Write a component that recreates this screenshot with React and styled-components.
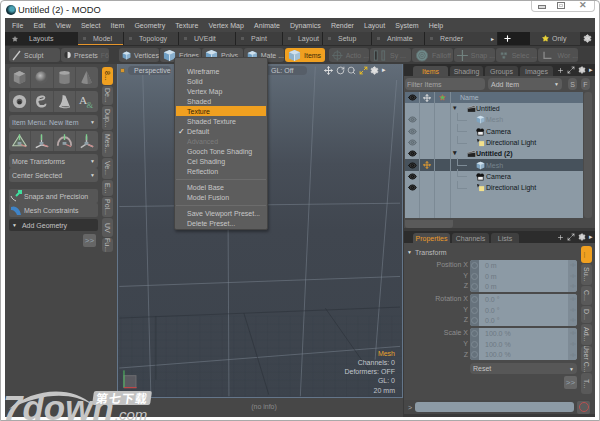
import React from "react";
import styled, { createGlobalStyle } from "styled-components";
import { Settings, Search, RotateCw, Move, Star, Plus, Eye, Maximize2 } from "lucide-react";

const GlobalStyle = createGlobalStyle`
  html, body { margin: 0; padding: 0; background: #fff; }
  * { box-sizing: border-box; }
  body { font-family: "Liberation Sans", Arial, sans-serif; font-size: 7px; }
`;

const menus = ["File", "Edit", "View", "Select", "Item", "Geometry", "Texture", "Vertex Map", "Animate", "Dynamics", "Render", "Layout", "System", "Help"];
const layouts = [
  { name: "Model", w: 45, active: true },
  { name: "Topology", w: 54 },
  { name: "UVEdit", w: 56 },
  { name: "Paint", w: 46 },
  { name: "Layout", w: 39 },
  { name: "Setup", w: 48 },
  { name: "Animate", w: 52 },
  { name: "Render", w: 72, more: true },
];
const modes = [
  { name: "Vertices", w: 40, c: "#6f9fc4" },
  { name: "Edges", w: 41, c: "#6f9fc4" },
  { name: "Polys", w: 41, c: "#6f9fc4" },
  { name: "Mate ...", w: 40, c: "#6f9fc4" },
];
const snaps = [
  { name: "Actio ...", w: 40 },
  { name: "Sy ...", w: 41 },
  { name: "Falloff", w: 41 },
  { name: "Snap ...", w: 41 },
  { name: "Selec ...", w: 41 },
  { name: "Wor ...", w: 40 },
];
const sideTabs = [
  { t: "8...", h: 18, on: true },
  { t: "De...", h: 19 },
  { t: "Dup...", h: 24 },
  { t: "Mes...", h: 26 },
  { t: "Ve...", h: 21 },
  { t: "E...", h: 16 },
  { t: "Pol...", h: 20 },
  { t: "UV", h: 19 },
  { t: "Fu...", h: 14 },
];
const propTabs = [
  { t: "...", h: 17, on: true },
  { t: "Su...", h: 21 },
  { t: "C...", h: 19 },
  { t: "D...", h: 17 },
  { t: "Ad...", h: 21 },
  { t: "User C...", h: 26 },
  { t: "T...", h: 21 },
];
const viewMenu = [
  ["Wireframe"], ["Solid"], ["Vertex Map"], ["Shaded"], ["Texture", "on"], ["Shaded Texture"],
  ["Default", "check"], ["Advanced", "off"], ["Gooch Tone Shading"], ["Cel Shading"], ["Reflection"],
  null, ["Model Base"], ["Model Fusion"], null, ["Save Viewport Preset..."], ["Delete Preset..."],
];
const tree = [
  { name: "Untitled", icon: "scene", depth: 0, vis: false },
  { name: "Mesh", icon: "mesh", depth: 1, vis: "dim", dim: true },
  { name: "Camera", icon: "camera", depth: 1, vis: "dim" },
  { name: "Directional Light", icon: "light", depth: 1, vis: "dim" },
  { name: "Untitled (2)", icon: "scene", depth: 0, vis: true, bold: true },
  { name: "Mesh", icon: "mesh", depth: 1, vis: true, dim: true, sel: true },
  { name: "Camera", icon: "camera", depth: 1, vis: true },
  { name: "Directional Light", icon: "light", depth: 1, vis: true },
];
const transforms = [
  { label: "Position", vals: ["0 m", "0 m", "0 m"] },
  { label: "Rotation", vals: ["0.0 °", "0.0 °", "0.0 °"] },
  { label: "Scale", vals: ["100.0 %", "100.0 %", "100.0 %"] },
];

/* ---------- drawings ---------- */
const CubeIcon = ({ size = 13, c = "#6f9fc4" }) => (
  <svg width={size} height={size} viewBox="0 0 14 14">
    <path d="M7 1l6 2.6v6.6L7 13 1 10.200V3.600z" fill={c} />
    <path d="M1 3.600L7 6.200l6-2.600L7 1z" fill="#cfe0ec" />
    <path d="M7 6.200V13l6-2.800V3.600z" fill="#fff" fillOpacity=".18" />
    <path d="M7 6.200V13" stroke="#e8f1f7" strokeWidth=".8" />
  </svg>
);

const PrimIcon = ({ kind }) => {
  const grey = "#8b8b8b";
  const size = { width: 17, height: 17, viewBox: "0 0 18 18" };
  if (kind === "cube") return <svg {...size}><path d="M9 2l6 3v8l-6 3-6-3V5z" fill={grey} /><path d="M3 5l6 3 6-3-6-3z" fill="#a5a5a5" /><path d="M9 8v8l6-3V5z" fill="#6f6f6f" /></svg>;
  if (kind === "sphere") return <svg {...size}><defs><radialGradient id="sph" cx=".4" cy=".35"><stop offset="0" stopColor="#bbb" /><stop offset="1" stopColor="#5c5c5c" /></radialGradient></defs><circle cx="9" cy="9" r="6.500" fill="url(#sph)" /></svg>;
  if (kind === "cyl") return <svg {...size}><path d="M3.500 4v10c0 2.400 11 2.400 11 0V4z" fill="#808080" /><ellipse cx="9" cy="4" rx="5.500" ry="2" fill="#a5a5a5" /></svg>;
  if (kind === "cone") return <svg {...size}><path d="M9 2l5.500 12c-1 2.400-10 2.400-11 0z" fill="#8a8a8a" /><path d="M9 2l5.500 12c-.8 1.200-3 1.800-4 1.900z" fill="#6a6a6a" /></svg>;
  if (kind === "torus") return <svg {...size}><circle cx="9" cy="9" r="5" fill="none" stroke="#b5b5b5" strokeWidth="4" /><circle cx="9" cy="10" r="2" fill="#333" /></svg>;
  if (kind === "capsule") return <svg {...size}><path d="M5 4c6-3 10 0 7 3-3 2-7 0-6 3s5 2 8 1c1 3-3 5-7 4S2 7 5 4z" fill="#b9b9b9" /><path d="M7 6l4-1M7 12l5 0" stroke="#444" /></svg>;
  if (kind === "bell") return <svg {...size}><path d="M7 2l3 1 5 12c-3 1.500-8 1.500-12-.5 3-3 4-8 4-12.500z" fill="#bdbdbd" /><path d="M6 14c2 .8 5 1 8 .5" stroke="#777" /></svg>;
  if (kind === "text") return <svg {...size}><text x="1" y="12" fontSize="12" fontFamily="Liberation Serif" fill="#cfcfcf">A</text><text x="9" y="16" fontSize="9" fontFamily="Liberation Serif" fill="#6fae8d">&amp;</text></svg>;
  return null;
};

const GizmoIcon = ({ kind }) => (
  <svg width="19" height="18" viewBox="0 0 20 18">
    {kind === "rot" && <path d="M3 14C3 2 17 2 17 14" fill="none" stroke="#b8a8a8" strokeWidth="2" />}
    {kind === "all" && <path d="M10 3l7 11H3z" fill="#5f6d62" stroke="#b5c9b0" strokeWidth="1.200" />}
    {kind === "move" && <path d="M10 3v10l-6 3M10 13l7 2" fill="none" stroke="#cfcfcf" strokeWidth="1.300" />}
    {kind === "scale" && <path d="M10 4v8l-6 4M10 12l7 3" fill="none" stroke="#bcbcbc" strokeWidth="1.600" />}
    <path d="M10 8v-6" stroke="#7fd08f" strokeWidth="1.400" />
    <path d="M10 12l7 3" stroke="#d08585" strokeWidth="1.200" />
    <rect x="8" y="10" width="4" height="3" fill="#8fa0a8" />
  </svg>
);

const GhostIcon = ({ kind }) => (
  <svg width="14" height="13" viewBox="0 0 14 14" fill="none" stroke="#5f6d6d" strokeWidth="1">
    {kind === 0 && <><circle cx="7" cy="7" r="5" /><path d="M7 0v14M0 7h14" /></>}
    {kind === 1 && <><rect x="1" y="2" width="3" height="10" fill="#333" /><rect x="9" y="2" width="3" height="10" fill="#555" /></>}
    {kind === 2 && <><circle cx="7" cy="7" r="6" fill="#6f8a8a" /><circle cx="7" cy="7" r="3.500" /><circle cx="7" cy="7" r="1.500" /></>}
    {kind === 3 && <><path d="M7 0v14M0 7h14" stroke="#71827f" strokeWidth="1.600" /></>}
    {kind === 4 && <><path d="M3 3h3v3H3zM8 3h3v3H8zM5.500 8h3v3h-3z" fill="#71827f" /></>}
    {kind === 5 && <path d="M3 3v7h8" stroke="#8a8a8a" strokeWidth="1.400" />}
  </svg>
);

const TreeIcon = ({ kind }) => {
  if (kind === "mesh") return <CubeIcon size={9} c="#7fa4c0" />;
  if (kind === "camera") return (
    <svg width="9" height="9" viewBox="0 0 10 10"><circle cx="3" cy="4" r="2.600" fill="#111" /><circle cx="6.800" cy="3.600" r="2" fill="#111" /><rect x="2" y="5" width="6" height="4" fill="#eee" stroke="#111" strokeWidth=".8" /></svg>
  );
  if (kind === "light") return (
    <svg width="9" height="9" viewBox="0 0 10 10"><path d="M1 1l3 1-2 3z" fill="#222" /><rect x="3.500" y="3.500" width="5.500" height="5.500" fill="#f3e18c" /></svg>
  );
  return (
    <svg width="9" height="9" viewBox="0 0 12 10"><rect x="1" y="4" width="10" height="5.500" fill="#222" /><path d="M1 4l9-3 1 2-9 2z" fill="#444" stroke="#ddd" strokeWidth=".5" /></svg>
  );
};

const EyeGlyph = ({ dim }) => (
  <Eye size={9} strokeWidth={2.4} color={dim ? "#5f6a72" : "#111"} fill={dim ? "#76838c" : "#333"} />
);

const Caret = () => <CaretMark>▼</CaretMark>;

/* ---------- window frame ---------- */
const Window = styled.div`
  width: 600px;
  height: 421px;
  overflow: hidden;
  position: relative;
  background: #fff;
  border: 1px solid #a9a9a9;
  border-radius: 4px 4px 0 0;
  padding: 0 4px 3px;
  display: flex;
  flex-direction: column;
`;
const TitleBar = styled.div`
  height: 17px;
  flex: none;
  display: flex;
  align-items: center;
  gap: 2px;
  padding: 0 0 0 1px;
  font-size: 9.300px;
  color: #222;
`;
const AppLogo = styled.span`
  width: 10px;
  height: 10px;
  border-radius: 50%;
  background: radial-gradient(circle at 60% 40%, #4aa3b5 0 25%, #12303a 60%);
`;
const WinButtons = styled.div`
  margin-left: auto;
  margin-top: -8px;
  width: 64px;
  height: 13px;
  border: 1px solid #c8c8c8;
  border-top: 0;
  border-radius: 0 0 4px 4px;
  display: grid;
  grid-template-columns: 19px 19px 26px;
  align-items: center;
  justify-items: center;
`;
const WinMin = styled.span`
  width: 8px;
  height: 4px;
  margin-top: 3px;
  border: 1px solid #777;
  background: #ddd;
`;
const WinMax = styled.span`
  width: 8px;
  height: 7px;
  border: 1px solid #777;
  outline: 1px solid #ccc;
  outline-offset: -3px;
`;
const WinClose = styled.span`
  font-size: 9px;
  line-height: 9px;
  font-weight: bold;
  color: #888;
`;

const AppBody = styled.div`
  flex: 1;
  min-height: 0;
  background: #3a3a3a;
  color: #bdbdbd;
  display: flex;
  flex-direction: column;
`;
const MenuBar = styled.div`
  height: 14px;
  flex: none;
  display: flex;
  align-items: center;
  gap: 10.200px;
  padding-left: 7px;
  background: #454545;
  color: #c9c9c9;
`;
const LayoutBar = styled.div`
  height: 13px;
  flex: none;
  display: flex;
  align-items: stretch;
  background: #222;
  color: #bdbdbd;
`;
const LayoutsCell = styled.div`
  width: 73px;
  display: flex;
  align-items: center;
  gap: 11px;
  padding-left: 7px;
  background: #232323;
`;
const LayoutTab = styled.div`
  width: ${(p) => p.$w}px;
  margin-right: 1px;
  display: flex;
  align-items: center;
  gap: 7px;
  padding: 0 3px 0 5px;
  background: #3e3e3e;
  border-bottom: ${(p) => (p.$active ? "1px solid #e6952b" : "0")};
  &::before {
    content: "";
    width: 3px;
    height: 3px;
    background: #5a5a5a;
  }
`;
const TabMore = styled.span`
  margin-left: auto;
  color: #ddd;
  font-size: 6px;
`;
const AddLayout = styled.div`
  width: 32px;
  display: flex;
  align-items: center;
  justify-content: center;
  padding-right: 14px;
  background: #1d1d1d;
  color: #fff;
`;
const OnlyCell = styled.div`
  flex: 1;
  display: flex;
  align-items: center;
  gap: 3px;
  padding-left: 12px;
  background: #3e3e3e;
`;
const GearCell = styled.div`
  width: 15px;
  display: flex;
  align-items: center;
  justify-content: center;
  background: #2c2c2c;
`;

const ToolBar = styled.div`
  height: 19px;
  flex: none;
  display: flex;
  align-items: center;
  padding-left: 4px;
  background: #3d3d3d;
  border-top: 1px solid #2d2d2d;
`;
const ToolButton = styled.div`
  width: ${(p) => p.$w}px;
  height: 14px;
  display: flex;
  align-items: center;
  gap: 3px;
  padding-left: 3px;
  white-space: nowrap;
  overflow: hidden;
  background: ${(p) => (p.$on ? "#f0a020" : "#505050")};
  color: ${(p) => (p.$on ? "#3a2a08" : p.$ghost ? "#6e6e6e" : "#bdbdbd")};
  border-radius: 3px;
  margin-right: 1px;
`;
const KeyHint = styled.span`
  color: #666;
`;
const ToolGap = styled.div`
  width: ${(p) => p.$w}px;
  flex: none;
`;

/* ---------- left tools ---------- */
const MainRow = styled.div`
  flex: 1;
  min-height: 0;
  display: flex;
`;
const CenterColumn = styled.div`
  width: 398px;
  display: flex;
  flex-direction: column;
  background: #474747;
`;
const WorkRow = styled.div`
  flex: 1;
  min-height: 0;
  display: flex;
`;
const StatusBar = styled.div`
  height: 19px;
  flex: none;
  display: flex;
  align-items: flex-start;
  justify-content: center;
  padding: 5px 0 0 120px;
  color: #8b8b8b;
  background: #474747;
`;
const ToolPanel = styled.div`
  width: 97px;
  padding: 3px 4px 0;
  display: flex;
  flex-direction: column;
  background: #474747;
  flex: none;
`;
const ToolBlock = styled.div`
  display: grid;
  grid-template-columns: repeat(4, 1fr);
  height: ${(p) => p.$h}px;
  margin-bottom: 3px;
  background: #595959;
  border-radius: 3px;
  overflow: hidden;
`;
const ToolCell = styled.div`
  display: flex;
  align-items: center;
  justify-content: center;
  border-right: 1px solid #4d4d4d;
  &:last-child {
    border-right: 0;
  }
`;
const DropRow = styled.div`
  height: 14px;
  display: flex;
  align-items: center;
  justify-content: space-between;
  padding: 0 3px;
  background: #575757;
  color: ${(p) => p.$c || "#c4c4c4"};
  border-radius: 3px;
  margin-bottom: ${(p) => p.$mb ?? 2}px;
`;
const CaretMark = styled.span`
  font-size: 5px;
  color: #d6d6d6;
`;
const ActionRow = styled.div`
  height: 14px;
  display: flex;
  align-items: center;
  gap: 2px;
  padding-left: 1px;
  background: #565656;
  color: #c4c4c4;
  border-radius: 2px;
`;
const GroupRow = styled.div`
  height: 12px;
  margin-top: 2px;
  display: flex;
  align-items: center;
  gap: 5px;
  padding-left: 3px;
  background: #333;
  color: #c4c4c4;
  border-radius: 2px;
`;
const MoreButton = styled.div`
  width: ${(p) => p.$w || 13}px;
  height: 13px;
  margin: ${(p) => p.$m || "3px 2px 0 auto"};
  display: flex;
  align-items: center;
  justify-content: center;
  background: #666;
  color: #95a3b0;
  font-size: 8px;
  border-radius: 2px;
`;
const SideTabs = styled.div`
  width: ${(p) => p.$w || 15}px;
  flex: none;
  padding-top: 3px;
  display: flex;
  flex-direction: column;
  gap: 1px;
`;
const SideTab = styled.div`
  width: 11px;
  height: ${(p) => p.$h}px;
  flex: none;
  writing-mode: vertical-rl;
  display: flex;
  align-items: center;
  justify-content: center;
  white-space: nowrap;
  overflow: hidden;
  border-radius: 3px;
  background: ${(p) => (p.$on ? "#f0a020" : "#595959")};
  color: ${(p) => (p.$on ? "#2c2208" : "#bcbcbc")};
`;

/* ---------- viewport ---------- */
const Viewport = styled.div`
  width: 286px;
  flex: none;
  position: relative;
  display: flex;
  flex-direction: column;
  overflow: hidden;
  background: linear-gradient(#626d79 0, #56606b 12%, #474e58 30%, #40464f 50%, #3c434c 100%);
  border: 1px solid #64768a;
  border-top: 0;
`;
const GridLines = styled.svg`
  position: absolute;
  inset: 0;
  width: 100%;
  height: 100%;
`;
const ViewHeader = styled.div`
  position: relative;
  height: 12px;
  flex: none;
  display: flex;
  align-items: center;
  padding-left: 3px;
`;
const ViewDot = styled.span`
  width: 3px;
  height: 3px;
  margin-right: 4px;
  background: #d8952b;
  outline: 1px solid #6f6a55;
`;
const ViewPill = styled.div`
  width: ${(p) => p.$w}px;
  height: 9px;
  margin-left: ${(p) => p.$ml || 0}px;
  display: flex;
  align-items: center;
  padding-left: 6px;
  background: #565e68;
  border-radius: 4px;
  color: #c3c8cd;
`;
const ViewTools = styled.div`
  margin-left: 17px;
  display: flex;
  align-items: center;
  gap: 2.500px;
  color: #e4e4e4;
`;
const ViewInfo = styled.div`
  position: relative;
  margin-top: auto;
  padding: 0 7px 2px 0;
  text-align: right;
  line-height: 9.300px;
  color: #c2c7cc;
`;
const InfoTitle = styled.div`
  color: #e6a32e;
`;

/* ---------- view menu ---------- */
const PopMenu = styled.div`
  position: absolute;
  left: 173px;
  top: 56px;
  width: 94px;
  height: 173px;
  padding: 8px 1px 0;
  background: #5d5d5d;
  border: 1px solid #444;
  border-radius: 2px;
  box-shadow: 1px 2px 3px rgba(0, 0, 0, 0.35);
  z-index: 3;
`;
const PopItem = styled.div`
  height: 10px;
  display: flex;
  align-items: center;
  padding-left: 11px;
  position: relative;
  white-space: nowrap;
  background: ${(p) => (p.$kind === "on" ? "#f0a020" : "transparent")};
  color: ${(p) => (p.$kind === "on" ? "#332407" : p.$kind === "off" ? "#7c7c7c" : "#c8c8c8")};
`;
const PopCheck = styled.span`
  position: absolute;
  left: 2px;
  font-size: 8px;
  color: #eee;
`;
const PopRule = styled.div`
  height: 2.500px;
  margin: 1.500px 0 2px;
  border-bottom: 1px solid #6c6c6c;
`;

/* ---------- right panels ---------- */
const RightColumn = styled.div`
  flex: 1;
  min-width: 0;
  display: flex;
  flex-direction: column;
  background: #3a3a3a;
  padding: 0 0 3px 1px;
`;
const PanelTabs = styled.div`
  height: 12px;
  flex: none;
  display: flex;
  align-items: flex-end;
  padding-left: 9px;
  background: #2c2c2c;
  color: #a6a6a6;
`;
const PanelTab = styled.div`
  width: ${(p) => p.$w}px;
  height: 10px;
  margin-right: 2px;
  display: flex;
  align-items: center;
  justify-content: center;
  background: ${(p) => (p.$on ? "#4b4b4b" : "#3f3f3f")};
  color: ${(p) => (p.$on ? "#eb9c2a" : "#9c9c9c")};
  border-radius: 3px 3px 0 0;
`;
const PanelTools = styled.div`
  margin-left: auto;
  padding: 0 2px 2px 0;
  display: flex;
  align-items: center;
  gap: 3px;
  color: #ddd;
`;
const PanelBody = styled.div`
  background: #4a4a4a;
  display: flex;
  flex-direction: column;
  padding: ${(p) => p.$p};
`;
const ItemsPanel = styled(PanelBody)`
  height: 152px;
  flex: none;
  margin-bottom: 3px;
`;
const FilterRow = styled.div`
  height: 12px;
  flex: none;
  display: flex;
  gap: 3px;
  margin-bottom: 2px;
`;
const FilterInput = styled.div`
  width: 80px;
  display: flex;
  align-items: center;
  padding-left: 2px;
  background: #5c5c5c;
  color: #a5a5a5;
  border-radius: 4px;
`;
const AddItem = styled(FilterInput)`
  width: 74px;
  justify-content: space-between;
  padding: 0 3px 0 3px;
  color: #c4c4c4;
`;
const RoundKey = styled.div`
  width: 9px;
  margin-left: ${(p) => p.$ml || 0}px;
  display: flex;
  align-items: center;
  justify-content: center;
  background: #5c5c5c;
  color: #b5b5b5;
  border-radius: 4px;
`;
const TableRow = styled.div`
  flex: 1;
  min-height: 0;
  display: flex;
  gap: 1px;
`;
const Table = styled.div`
  width: 178px;
  background: #8c9aa5;
  display: flex;
  flex-direction: column;
`;
const TableHead = styled.div`
  height: 11px;
  flex: none;
  display: grid;
  grid-template-columns: 15px 15px 16px 1fr;
  background: #5d6d7c;
  color: #a8b6c2;
`;
const TreeRow = styled.div`
  height: 11.300px;
  flex: none;
  display: grid;
  grid-template-columns: 15px 15px 16px 1fr;
  background: ${(p) => (p.$sel ? "#47525c" : "transparent")};
`;
const TreeCell = styled.div`
  display: flex;
  align-items: center;
  justify-content: center;
  border-right: 1px solid #7c8a95;
`;
const NameCell = styled.div`
  display: flex;
  align-items: center;
  gap: ${(p) => (p.$depth ? 1 : 0)}px;
  padding-left: 2px;
  white-space: nowrap;
  color: ${(p) => (p.$dim ? "#75828c" : "#10161a")};
  font-weight: ${(p) => (p.$bold ? "bold" : "normal")};
  &::before {
    content: "${(p) => (p.$depth ? "" : "▾")}";
    flex: none;
    font-size: 7px;
    color: #222;
    width: ${(p) => (p.$depth ? 9 : 14)}px;
    height: ${(p) => (p.$depth ? 7 : 9)}px;
    margin: ${(p) => (p.$depth ? "-6px 8px 0 4px" : "0")};
    border-left: ${(p) => (p.$depth ? "1px solid #7d8b96" : "0")};
    border-bottom: ${(p) => (p.$depth ? "1px solid #7d8b96" : "0")};
  }
`;
const HeadName = styled.div`
  display: flex;
  align-items: center;
  padding-left: 9px;
`;
const TableFill = styled.div`
  flex: 1;
  display: grid;
  grid-template-columns: 15px 15px 16px;
  & > div {
    border-right: 1px solid #7c8a95;
  }
`;
const VScroll = styled.div`
  flex: 1;
  margin-right: 3px;
  background: #565656;
  border-radius: 3px;
`;
const HScroll = styled.div`
  height: 8px;
  flex: none;
  margin-top: 2px;
  width: 48px;
  background: #5a5a5a;
  border-radius: 0 0 3px 3px;
`;
const PropsPanel = styled(PanelBody)`
  flex: 1;
  min-height: 0;
  flex-direction: row;
`;
const PropsMain = styled.div`
  width: 177px;
  flex: none;
  padding: 4px 4px 0 0;
  display: flex;
  flex-direction: column;
`;
const TransformHead = styled.div`
  height: 10px;
  display: flex;
  align-items: center;
  gap: 3px;
  padding-left: 3px;
  margin-bottom: 3px;
  color: #bdbdbd;
`;
const FieldSet = styled.div`
  display: grid;
  grid-template-columns: 66px 1fr;
  margin-bottom: 2px;
`;
const FieldLabels = styled.div`
  display: flex;
  flex-direction: column;
  text-align: right;
  padding-right: 2px;
  color: #8e8e8e;
`;
const FieldLabel = styled.div`
  height: 10.700px;
  line-height: 10.700px;
`;
const FieldGroup = styled.div`
  background: #8c9aa5;
  border-radius: 3px;
  overflow: hidden;
`;
const FieldRow = styled.div`
  height: 10.700px;
  display: grid;
  grid-template-columns: 9px 1fr 9px;
  align-items: center;
  color: #6d7983;
`;
const FieldKnob = styled.div`
  height: 100%;
  background: #66727c;
  display: flex;
  align-items: center;
  justify-content: center;
  &::after {
    content: "";
    width: 5px;
    height: 5px;
    border-radius: 50%;
    border: 1px solid #7d8992;
  }
`;
const FieldValue = styled.div`
  padding-left: 6px;
`;
const FieldArrows = styled.div`
  height: 100%;
  background: #7e8b96;
  font-size: 4px;
  line-height: 10.700px;
  text-align: center;
  color: #6a7680;
`;
const ResetRow = styled(DropRow)`
  width: 107px;
  height: 11px;
  margin: 1px 0 0 auto;
  border-radius: 4px;
`;
const CommandBar = styled.div`
  height: 14px;
  flex: none;
  display: flex;
  align-items: center;
  background: #474747;
  padding-left: 4px;
  color: #aaa;
`;
const CommandInput = styled.div`
  width: 159px;
  height: 10px;
  margin-left: 3px;
  background: #8c9aa5;
  border-radius: 3px;
`;
const RecButton = styled.div`
  width: 13px;
  height: 13px;
  margin-left: 3px;
  display: flex;
  align-items: center;
  justify-content: center;
  background: #5b5b5b;
  border-radius: 2px;
  &::after {
    content: "";
    width: 8px;
    height: 8px;
    border: 1px solid #b85050;
    border-radius: 50%;
  }
`;

/* ---------- watermark ---------- */
const Watermark = styled.div`
  position: absolute;
  left: 0;
  top: 378px;
  width: 170px;
  height: 43px;
  z-index: 4;
  color: #c6c6c6;
`;
const WmArc = styled.svg`
  position: absolute;
  left: 0;
  top: 0;
`;
const WmWord = styled.div`
  position: absolute;
  left: 2px;
  top: 16px;
  font: italic bold 35px/26px "Liberation Sans", sans-serif;
  white-space: nowrap;
`;
const WmCom = styled.span`
  font-size: 15px;
  font-weight: normal;
  margin-left: 1px;
`;
const WmBadge = styled.div`
  position: absolute;
  left: 92px;
  top: 12px;
  width: 58px;
  height: 14px;
  display: flex;
  align-items: center;
  justify-content: center;
  background: #c2c2c2;
  border-radius: 2px;
  color: #fff;
  font: bold 12px/14px "Noto Sans CJK SC", sans-serif;
  letter-spacing: 1px;
  transform: skewX(-8deg);
`;

const fineH = Array.from({ length: 11 }, (_, i) => 770 + i * 24);
const fineV = Array.from({ length: 28 }, (_, i) => i * 34 - 20);

const App = () => (
  <Window>
    <GlobalStyle />
    <TitleBar>
      <AppLogo />
      Untitled (2) - MODO
      <WinButtons>
        <WinMin />
        <WinMax />
        <WinClose>✕</WinClose>
      </WinButtons>
    </TitleBar>
    <AppBody>
      <MenuBar>
        {menus.map((m) => (
          <span key={m}>{m}</span>
        ))}
      </MenuBar>
      <LayoutBar>
        <LayoutsCell>
          <Star size={6} color="#999" fill="#999" />
          Layouts
        </LayoutsCell>
        {layouts.map((l) => (
          <LayoutTab key={l.name} $w={l.w} $active={l.active}>
            {l.name}
            {l.more && <TabMore>▸</TabMore>}
          </LayoutTab>
        ))}
        <AddLayout>
          <Plus size={9} strokeWidth={3} />
        </AddLayout>
        <OnlyCell>
          <Star size={7} color="#e8d23a" fill="#e8d23a" />
          Only
        </OnlyCell>
        <GearCell>
          <Settings size={9} color="#ddd" fill="#ccc" />
        </GearCell>
      </LayoutBar>
      <ToolBar>
        <ToolButton $w={51}>
          <svg width="9" height="11" viewBox="0 0 9 11">
            <path d="M1 10L8 1" stroke="#c9c9c9" strokeWidth="1.300" />
          </svg>
          Sculpt
        </ToolButton>
        <ToolButton $w={48}>
          <svg width="10" height="10" viewBox="0 0 10 10">
            <circle cx="5" cy="5" r="4.500" fill="#333" />
            <path d="M5 .5a4.500 4.500 0 0 1 0 9z" fill="#ddd" />
          </svg>
          Presets
          <KeyHint>F6</KeyHint>
        </ToolButton>
        <ToolGap $w={9} />
        {modes.map((m) => (
          <ToolButton key={m.name} $w={m.w}>
            <CubeIcon c={m.c} />
            {m.name}
          </ToolButton>
        ))}
        <ToolButton $w={40} $on>
          <CubeIcon c="#8db2cc" />
          Items
        </ToolButton>
        <ToolGap $w={3} />
        {snaps.map((s, i) => (
          <ToolButton key={s.name} $w={s.w} $ghost>
            <GhostIcon kind={i} />
            {s.name}
          </ToolButton>
        ))}
      </ToolBar>
      <MainRow>
        <CenterColumn>
          <WorkRow>
            <ToolPanel>
              <ToolBlock $h={21}>
                {["cube", "sphere", "cyl", "cone"].map((k) => (
                  <ToolCell key={k}><PrimIcon kind={k} /></ToolCell>
                ))}
              </ToolBlock>
              <ToolBlock $h={21}>
                {["torus", "capsule", "bell", "text"].map((k) => (
                  <ToolCell key={k}><PrimIcon kind={k} /></ToolCell>
                ))}
              </ToolBlock>
              <DropRow $c="#a9b6c4">
                Item Menu: New Item
                <Caret />
              </DropRow>
              <ToolBlock $h={20}>
                {["all", "move", "rot", "scale"].map((k) => (
                  <ToolCell key={k}><GizmoIcon kind={k} /></ToolCell>
                ))}
              </ToolBlock>
              <DropRow $mb={0}>
                More Transforms
                <Caret />
              </DropRow>
              <DropRow $mb={7}>
                Center Selected
                <Caret />
              </DropRow>
              <ActionRow>
                <svg width="12" height="12" viewBox="0 0 12 12">
                  <path d="M6 6l5-5M8 1h3v3" stroke="#3fe0a0" strokeWidth="2" fill="none" />
                  <path d="M1 6c1 3 3 4 5 5" stroke="#ccc" fill="none" />
                </svg>
                Snaps and Precision
              </ActionRow>
              <ActionRow>
                <svg width="12" height="12" viewBox="0 0 12 12">
                  <path d="M1 3c5-2 9 2 10 8H7C6 8 4 6 1 6z" fill="#3f84c8" />
                </svg>
                Mesh Constraints
              </ActionRow>
              <GroupRow>
                <CaretMark>▼</CaretMark>
                Add Geometry
              </GroupRow>
              <MoreButton>&gt;&gt;</MoreButton>
            </ToolPanel>
            <SideTabs>
              {sideTabs.map((s) => (
                <SideTab key={s.t} $h={s.h} $on={s.on}>
                  {s.t}
                </SideTab>
              ))}
            </SideTabs>
            <Viewport>
              <GridLines viewBox="6 12 855 1000" preserveAspectRatio="none">
                {fineH.map((y) => (
                  <path key={y} d={`M0 ${y}H870`} stroke="#333a44" strokeWidth="1" strokeOpacity=".3" />
                ))}
                {fineV.map((x) => (
                  <path key={x} d={`M${x} 770V1010`} stroke="#333a44" strokeWidth="1" strokeOpacity=".3" />
                ))}
                <g stroke="#7d8894" strokeWidth="2.500" fill="none" strokeOpacity=".6">
                  <path d="M80 20L105 1010" />
                  <path d="M335 0L340 1010" />
                  <path d="M600 20L555 1010" />
                  <path d="M845 60L780 900" />
                  <path d="M10 440L855 430" />
                  <path d="M10 680L855 650" />
                  <path d="M10 925L855 860" />
                </g>
                <g stroke="#2a2f36" strokeWidth="2" fill="none" strokeOpacity=".8">
                  <path d="M10 775L855 742" />
                  <path d="M120 770V960" />
                  <path d="M385 760L460 1005" />
                  <path d="M630 745L760 930" />
                </g>
                <g fill="none" strokeWidth="3">
                  <rect x="24" y="948" width="36" height="36" fill="#5a5a60" stroke="#6e6e70" />
                  <path d="M24 984V932" stroke="#4fc060" />
                  <path d="M24 984H62" stroke="#d04040" />
                </g>
              </GridLines>
              <ViewHeader>
                <ViewDot />
                <ViewPill $w={43}>Perspective</ViewPill>
                <ViewPill $w={42} $ml={94}>GL: Off</ViewPill>
                <ViewTools>
                  <Move size={9} strokeWidth={2.4} />
                  <RotateCw size={9} strokeWidth={2} />
                  <Search size={9} strokeWidth={1.8} />
                  <Maximize2 size={9} strokeWidth={2.6} color="#f0c020" />
                  <Settings size={9} fill="#ddd" />
                  <span>▸</span>
                </ViewTools>
              </ViewHeader>
              <ViewInfo>
                <InfoTitle>Mesh</InfoTitle>
                <div>Channels: 0</div>
                <div>Deformers: OFF</div>
                <div>GL: 0</div>
                <div>20 mm</div>
              </ViewInfo>
            </Viewport>
          </WorkRow>
          <StatusBar>(no info)</StatusBar>
        </CenterColumn>
        <RightColumn>
          <PanelTabs>
            <PanelTab $w={35} $on>Items</PanelTab>
            <PanelTab $w={33}>Shading</PanelTab>
            <PanelTab $w={33}>Groups</PanelTab>
            <PanelTab $w={33}>Images</PanelTab>
            <PanelTools>
              <Plus size={7} />
              <Maximize2 size={8} />
              <Settings size={8} fill="#ccc" />
              <span>▸</span>
            </PanelTools>
          </PanelTabs>
          <ItemsPanel $p="2px 0 0 1px">
            <FilterRow>
              <FilterInput>Filter Items</FilterInput>
              <AddItem>
                Add Item
                <Caret />
              </AddItem>
              <RoundKey $ml={3}>S</RoundKey>
              <RoundKey $ml={1}>F</RoundKey>
            </FilterRow>
            <TableRow>
              <Table>
                <TableHead>
                  <TreeCell><EyeGlyph /></TreeCell>
                  <TreeCell><Move size={8} color="#ddd" strokeWidth={3} /></TreeCell>
                  <TreeCell><Star size={7} color="#d9534f" fill="#5cb85c" /></TreeCell>
                  <HeadName>Name</HeadName>
                </TableHead>
                {tree.map((r, i) => (
                  <TreeRow key={i} $sel={r.sel}>
                    <TreeCell>{r.vis && <EyeGlyph dim={r.vis === "dim"} />}</TreeCell>
                    <TreeCell>{r.sel && <Move size={8} color="#e09a30" strokeWidth={3} />}</TreeCell>
                    <TreeCell />
                    <NameCell $depth={r.depth} $dim={r.dim} $bold={r.bold}>
                      <TreeIcon kind={r.icon} />
                      {r.name}
                    </NameCell>
                  </TreeRow>
                ))}
                <TableFill>
                  <div />
                  <div />
                  <div />
                </TableFill>
              </Table>
              <VScroll />
            </TableRow>
            <HScroll />
          </ItemsPanel>
          <PanelTabs>
            <PanelTab $w={37} $on>Properties</PanelTab>
            <PanelTab $w={37}>Channels</PanelTab>
            <PanelTab $w={28}>Lists</PanelTab>
            <PanelTools>
              <Plus size={7} />
              <Maximize2 size={8} />
              <Settings size={8} fill="#ccc" />
              <span>▸</span>
            </PanelTools>
          </PanelTabs>
          <PropsPanel $p="0">
            <PropsMain>
              <TransformHead>
                <CaretMark>▼</CaretMark>
                Transform
              </TransformHead>
              {transforms.map((g) => (
                <FieldSet key={g.label}>
                  <FieldLabels>
                    <FieldLabel>{g.label} X</FieldLabel>
                    <FieldLabel>Y</FieldLabel>
                    <FieldLabel>Z</FieldLabel>
                  </FieldLabels>
                  <FieldGroup>
                    {g.vals.map((v, i) => (
                      <FieldRow key={i}>
                        <FieldKnob />
                        <FieldValue>{v}</FieldValue>
                        <FieldArrows>◁▷</FieldArrows>
                      </FieldRow>
                    ))}
                  </FieldGroup>
                </FieldSet>
              ))}
              <ResetRow>
                Reset
                <Caret />
              </ResetRow>
              <MoreButton $m="2px 0 0 auto">&gt;&gt;</MoreButton>
            </PropsMain>
            <SideTabs $w={11}>
              {propTabs.map((s) => (
                <SideTab key={s.t} $h={s.h} $on={s.on}>
                  {s.t}
                </SideTab>
              ))}
            </SideTabs>
          </PropsPanel>
          <CommandBar>
            &gt;
            <CommandInput />
            <RecButton />
          </CommandBar>
        </RightColumn>
      </MainRow>
    </AppBody>
    <PopMenu>
      {viewMenu.map((m, i) =>
        m ? (
          <PopItem key={i} $kind={m[1]}>
            {m[1] === "check" && <PopCheck>✓</PopCheck>}
            {m[0]}
          </PopItem>
        ) : (
          <PopRule key={i} />
        )
      )}
    </PopMenu>
    <Watermark>
      <WmArc width="150" height="30" viewBox="0 0 150 30">
        <path d="M8 30C30 10 70 5 92 26C70 12 40 14 8 30z" fill="#c6c6c6" />
      </WmArc>
      <WmWord>
        7down<WmCom>.com</WmCom>
      </WmWord>
      <WmBadge>第七下载</WmBadge>
    </Watermark>
  </Window>
);

export default App;
